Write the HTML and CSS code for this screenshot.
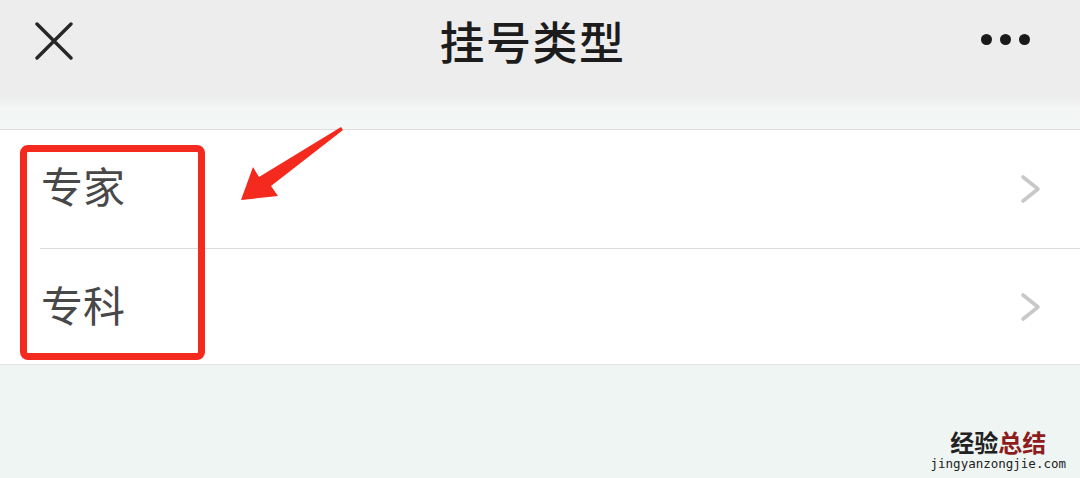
FILE: index.html
```html
<!DOCTYPE html>
<html>
<head>
<title>挂号类型</title>
<link rel="stylesheet" href="styles.css">
</head>
<body>
<div class="page">
    <div class="topbar">
        <div class="close">
            <svg width="38" height="38" viewBox="0 0 38 38"><path d="M2 2 L36 36 M36 2 L2 36" stroke="#262626" stroke-width="3.4" stroke-linecap="round"/></svg>
        </div>
        <div class="title">挂号类型</div>
        <div class="more"><span></span><span></span><span></span></div>
    </div>
    <div class="band"></div>
    <div class="list">
        <div class="row">
            <div class="label">专家</div>
            <svg class="chevron" width="22" height="30" viewBox="0 0 22 30"><path d="M3 3 L18 15 L3 27" fill="none" stroke="#c8c8c8" stroke-width="3.6" stroke-linecap="round" stroke-linejoin="round"/></svg>
        </div>
        <div class="row">
            <div class="label">专科</div>
            <svg class="chevron" width="22" height="30" viewBox="0 0 22 30"><path d="M3 3 L18 15 L3 27" fill="none" stroke="#c8c8c8" stroke-width="3.6" stroke-linecap="round" stroke-linejoin="round"/></svg>
        </div>
    </div>
    <div class="rest"></div>

    <div class="mark-box"></div>
    <svg class="mark-arrow" width="1080" height="478" viewBox="0 0 1080 478">
        <polygon points="341,127 343,130 271,186 278,196 241,200 253,167 259,177" fill="#f42a1e"/>
    </svg>
    <div class="watermark">
        <div class="wm-cn"><span class="wm-dark">经验</span><span class="wm-red">总结</span></div>
        <div class="wm-url">jingyanzongjie.com</div>
    </div>
</div>
</body>
</html>
```

FILE: styles.css
```css
html, body {
    margin: 0;
    padding: 0;
}
body {
    width: 1080px;
    height: 478px;
    overflow: hidden;
    background: #eff5f3;
    font-family: "Noto Sans CJK SC", "Noto Sans", sans-serif;
}
.page {
    position: relative;
    height: 478px;
    display: flex;
    flex-direction: column;
}
.topbar {
    height: 78px;
    padding: 0 50px 0 35px;
    background: #ededed;
    display: flex;
    align-items: center;
}
.close {
    width: 60px;
    height: 38px;
    margin-top: 4px;
}
.close svg {
    display: block;
}
.title {
    flex: 1;
    text-align: center;
    font-size: 45px;
    font-weight: 500;
    color: #1c1c1c;
    letter-spacing: 1.5px;
    margin-top: 2px;
}
.more {
    width: 60px;
    display: flex;
    justify-content: flex-end;
    gap: 8px;
}
.more span {
    width: 11px;
    height: 11px;
    border-radius: 50%;
    background: #1a1a1a;
}
.band {
    height: 51px;
    background: linear-gradient(#ededed 0, #ededed 20px, #f3f6f5 30px, #f3f7f5 100%);
    border-bottom: 1px solid #dedede;
}
.list {
    background: #fff;
    border-bottom: 1px solid #e4e4e4;
}
.row {
    height: 118px;
    margin-left: 40px;
    padding-right: 38px;
    display: flex;
    align-items: center;
    justify-content: space-between;
}
.row + .row {
    border-top: 1px solid #dcdcdc;
    height: 115px;
}
.label {
    font-size: 42px;
    color: #484848;
    margin-left: 1px;
    margin-bottom: 9px;
}
.row + .row .label {
    margin-bottom: 7px;
}
.rest {
    flex: 1;
    background: #eff5f3;
}
.mark-box {
    position: absolute;
    left: 20px;
    top: 145px;
    width: 171px;
    height: 201px;
    border: 7px solid #f42a1e;
    border-radius: 8px;
}
.mark-arrow {
    position: absolute;
    left: 0;
    top: 0;
}
.watermark {
    position: absolute;
    right: 14px;
    bottom: 6px;
    text-align: center;
}
.wm-cn {
    font-size: 24px;
    font-weight: 700;
    line-height: 28px;
}
.wm-dark {
    color: #222;
}
.wm-red {
    color: #8e1c1c;
}
.wm-url {
    font-family: "DejaVu Sans Mono", monospace;
    font-size: 12.5px;
    color: #222;
    line-height: 16px;
}
```
